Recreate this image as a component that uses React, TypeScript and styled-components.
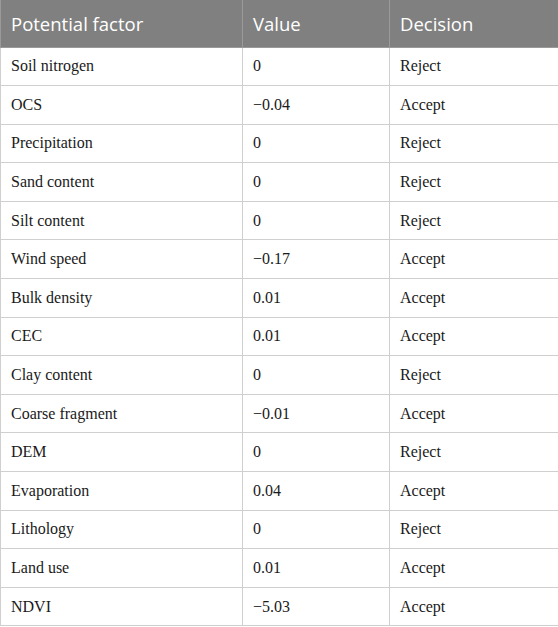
import React from "react";
import styled, { createGlobalStyle } from "styled-components";

const Global = createGlobalStyle`
  html, body { margin: 0; padding: 0; background: #ffffff; }
`;

const Table = styled.table`
  width: 558px;
  border-collapse: collapse;
  table-layout: fixed;
`;

const HeadCell = styled.th<{ $w: number }>`
  width: ${(p) => p.$w}px;
  height: 47px;
  box-sizing: border-box;
  background: #808080;
  color: #ffffff;
  font-family: "Open Sans", "Noto Sans", sans-serif;
  font-weight: 400;
  font-size: 18.5px;
  text-align: left;
  padding: 0 10px;
  border: 1px solid #9a9a9a;
  border-top: none;
`;

const Cell = styled.td`
  height: 38.6px;
  box-sizing: border-box;
  padding: 0 10px;
  border: 1px solid #cfcfcf;
  font-family: "Liberation Serif", "DejaVu Serif", serif;
  font-size: 16px;
  color: #1a1a1a;
  vertical-align: middle;
`;

const rows: [string, string, string][] = [
  ["Soil nitrogen", "0", "Reject"],
  ["OCS", "\u22120.04", "Accept"],
  ["Precipitation", "0", "Reject"],
  ["Sand content", "0", "Reject"],
  ["Silt content", "0", "Reject"],
  ["Wind speed", "\u22120.17", "Accept"],
  ["Bulk density", "0.01", "Accept"],
  ["CEC", "0.01", "Accept"],
  ["Clay content", "0", "Reject"],
  ["Coarse fragment", "\u22120.01", "Accept"],
  ["DEM", "0", "Reject"],
  ["Evaporation", "0.04", "Accept"],
  ["Lithology", "0", "Reject"],
  ["Land use", "0.01", "Accept"],
  ["NDVI", "\u22125.03", "Accept"],
];

export default function App() {
  return (
    <>
      <Global />
      <Table>
        <thead>
          <tr>
            <HeadCell $w={242}>Potential factor</HeadCell>
            <HeadCell $w={147}>Value</HeadCell>
            <HeadCell $w={169}>Decision</HeadCell>
          </tr>
        </thead>
        <tbody>
          {rows.map((r) => (
            <tr key={r[0]}>
              <Cell>{r[0]}</Cell>
              <Cell>{r[1]}</Cell>
              <Cell>{r[2]}</Cell>
            </tr>
          ))}
        </tbody>
      </Table>
    </>
  );
}
